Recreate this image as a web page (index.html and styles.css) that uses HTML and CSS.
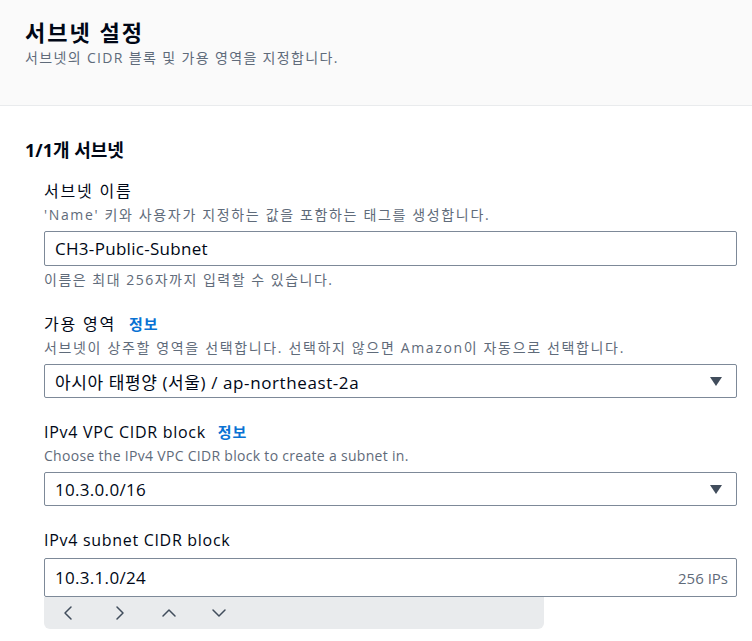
FILE: index.html
```html
<!DOCTYPE html>
<html lang="ko">
<head>
    <meta charset="UTF-8">
    <meta name="viewport" content="width=device-width, initial-scale=1.0">
    <title>서브넷 설정</title>
    <link rel="stylesheet" href="styles.css">
</head>
<body>

<div class="page-header">
    <h1>서브넷 설정</h1>
    <p>서브넷의 CIDR 블록 및 가용 영역을 지정합니다.</p>
</div>

<div class="subnet-section">
    <h2>1/1개 서브넷</h2>

    <div class="field">
        <label class="field-label ko">서브넷 이름</label>
        <div class="field-desc">'Name' 키와 사용자가 지정하는 값을 포함하는 태그를 생성합니다.</div>
        <div class="text-input">CH3-Public-Subnet</div>
        <div class="field-hint">이름은 최대 256자까지 입력할 수 있습니다.</div>
    </div>

    <div class="field">
        <label class="field-label ko">가용 영역 <a href="#" class="info">정보</a></label>
        <div class="field-desc">서브넷이 상주할 영역을 선택합니다. 선택하지 않으면 Amazon이 자동으로 선택합니다.</div>
        <div class="select-input">
            <span class="ko-value">아시아 태평양 (서울) / ap-northeast-2a</span>
            <span class="caret"></span>
        </div>
    </div>

    <div class="field">
        <label class="field-label">IPv4 VPC CIDR block <a href="#" class="info">정보</a></label>
        <div class="field-desc en">Choose the IPv4 VPC CIDR block to create a subnet in.</div>
        <div class="select-input">
            <span>10.3.0.0/16</span>
            <span class="caret"></span>
        </div>
    </div>

    <div class="field field-last">
        <label class="field-label">IPv4 subnet CIDR block</label>
        <div class="text-input cidr-input">
            <span>10.3.1.0/24</span>
            <span class="ip-count">256 IPs</span>
        </div>
        <div class="cidr-nav">
            <button class="nav-btn" title="이전">
                <svg width="16" height="16" viewBox="0 0 16 16"><path d="M10 2 4 8l6 6"/></svg>
            </button>
            <button class="nav-btn" title="다음">
                <svg width="16" height="16" viewBox="0 0 16 16"><path d="m6 2 6 6-6 6"/></svg>
            </button>
            <button class="nav-btn" title="위로">
                <svg width="16" height="16" viewBox="0 0 16 16"><path d="m2 11 6-6 6 6"/></svg>
            </button>
            <button class="nav-btn" title="아래로">
                <svg width="16" height="16" viewBox="0 0 16 16"><path d="m2 5 6 6 6-6"/></svg>
            </button>
        </div>
    </div>
</div>

</body>
</html>
```

FILE: styles.css
```css
body {
    margin: 0;
    font-family: "Open Sans", "Noto Sans CJK KR", sans-serif;
    color: #000716;
    background-color: #fff;
}
.page-header {
    background-color: #fafafa;
    border-bottom: 1px solid #e9ebed;
    padding: 17px 25px 37px;
}
.page-header h1 {
    margin: 0;
    font-size: 22px;
    line-height: 30px;
    font-weight: 700;
    letter-spacing: 2px;
}
.page-header p {
    margin: 1px 0 0;
    font-size: 14px;
    line-height: 20px;
    letter-spacing: 1.35px;
    color: #5f6b7a;
}
.subnet-section {
    padding: 32px 15px 0 25px;
}
.subnet-section h2 {
    margin: 0 0 18px;
    font-size: 18px;
    line-height: 24px;
    font-weight: 700;
}
.field {
    margin-left: 19px;
    margin-bottom: 23px;
}
.field-label {
    display: block;
    font-size: 16px;
    line-height: 22px;
    letter-spacing: 0.7px;
}
.field-label.ko {
    letter-spacing: 1.8px;
}
.info {
    margin-left: 7px;
    font-size: 15px;
    font-weight: 700;
    letter-spacing: 1px;
    color: #0972d3;
    text-decoration: none;
}
.field-desc {
    margin-top: 3px;
    font-size: 14px;
    line-height: 20px;
    letter-spacing: 1.65px;
    color: #5f6b7a;
}
.field-desc.en {
    letter-spacing: 0.3px;
}
.text-input,
.select-input {
    margin-top: 6px;
    box-sizing: border-box;
    height: 35px;
    padding: 0 14px 0 10px;
    border: 1px solid #7d8998;
    border-radius: 2px;
    font-size: 17px;
    letter-spacing: 0.3px;
    display: flex;
    align-items: center;
    justify-content: space-between;
}
.select-input {
    height: 34px;
}
.select-input .ko-value {
    letter-spacing: 0.6px;
}
.field-hint {
    margin-top: 4px;
    font-size: 14px;
    line-height: 20px;
    letter-spacing: 1.5px;
    color: #5f6b7a;
}
.caret {
    width: 0;
    height: 0;
    border-left: 6px solid transparent;
    border-right: 6px solid transparent;
    border-top: 9px solid #414d5c;
}
.field-last .text-input {
    margin-top: 7px;
}
.cidr-input {
    height: 39px;
    padding-right: 8px;
}
.ip-count {
    font-size: 15px;
    letter-spacing: 0;
    color: #5f6b7a;
}
.cidr-nav {
    display: flex;
    width: 500px;
    height: 32px;
    background-color: #e9ebed;
    border-radius: 0 0 6px 6px;
}
.nav-btn {
    width: 50px;
    padding: 0;
    border: none;
    background: none;
    display: flex;
    align-items: center;
    justify-content: center;
    cursor: pointer;
}
.nav-btn svg path {
    fill: none;
    stroke: #414d5c;
    stroke-width: 1.5;
    stroke-linecap: round;
    stroke-linejoin: round;
}
```
